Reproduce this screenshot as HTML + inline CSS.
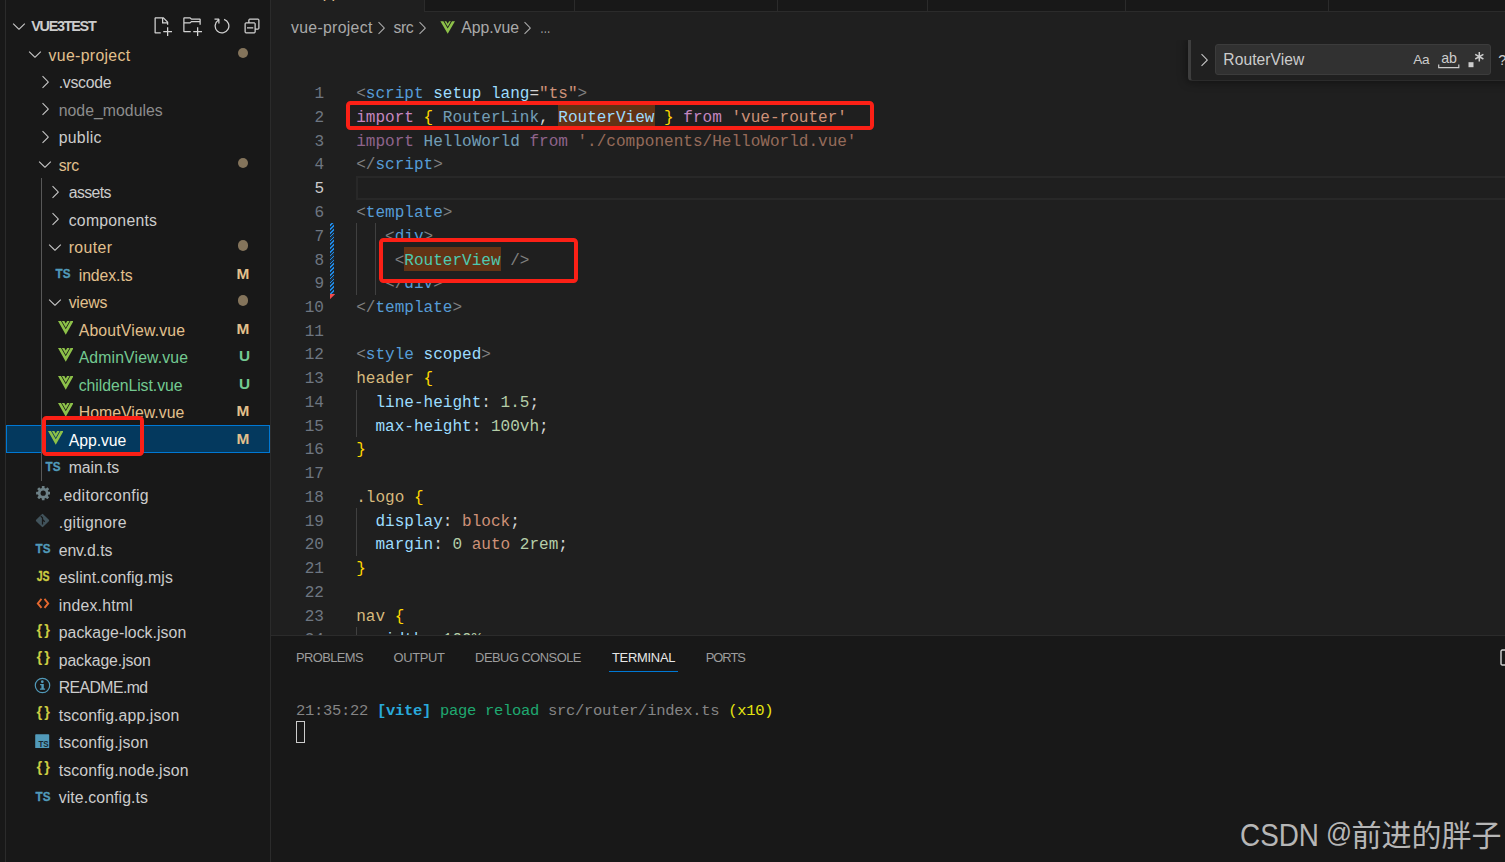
<!DOCTYPE html>
<html lang="en">
<head>
<meta charset="utf-8">
<title>App.vue - vue3test</title>
<style>
*{box-sizing:border-box;margin:0;padding:0}
html,body{width:1505px;height:862px;overflow:hidden;background:#181818}
body{position:relative;font-family:"Liberation Sans","Noto Sans CJK SC",sans-serif;color:#ccc;-webkit-font-smoothing:antialiased}
.abs{position:absolute}
/* ---------- sidebar ---------- */
#actbar{position:absolute;left:0;top:0;width:6px;height:862px;background:#181818;border-right:1px solid #2b2b2b}
#side{position:absolute;left:6px;top:0;width:265px;height:862px;background:#181818;border-right:1px solid #2b2b2b;overflow:hidden}
.row{position:absolute;left:0;width:264px;height:27.5px;line-height:27.5px;font-size:15.8px;white-space:nowrap;color:#ccc}
.row .lbl{position:absolute;top:1.3px}
.row .tw{position:absolute;top:3.75px;width:20px;height:20px;margin-left:-0.25px}
.row .ic{position:absolute;top:0;height:27.5px}
.row .sv{position:absolute}
.row .bdg{position:absolute;left:224px;width:26px;text-align:center;top:-0.5px;font-size:15.4px;font-weight:bold;letter-spacing:0}
.row .dot{position:absolute;left:232.1px;top:7.6px;width:10.2px;height:10.2px;border-radius:50%;background:#84745b}
.m{color:#e2c08d}.u{color:#73c991}.ign{color:#8c8c8c}
.row.sel{background:#04395e;box-shadow:inset 0 0 0 1px #0078d4}
.selm{color:#fff}
.tstxt{font-weight:bold;font-size:12.6px;letter-spacing:-0.3px;color:#519aba;font-family:"Liberation Sans",sans-serif}
/* ---------- editor ---------- */
#ed{position:absolute;left:271px;top:0;width:1234px;height:635px;background:#1f1f1f;overflow:hidden}
#tabs{position:absolute;left:0;top:0;width:1234px;height:12px;background:#181818;border-bottom:1px solid #2b2b2b;overflow:visible}
#tabs i{position:absolute;top:0;width:1px;height:12px;background:#2b2b2b}
#bc{position:absolute;left:0;top:13.5px;width:900px;height:28px;line-height:28px;font-size:15.8px;color:#a9a9a9;white-space:nowrap}
.ln,.cl{position:absolute;height:23.75px;line-height:23.75px;font-family:"Liberation Mono","DejaVu Sans Mono",monospace;font-size:16.04px;white-space:pre}
.ln{left:0;width:53px;text-align:right;color:#6e7681}
.cl{left:85.2px;color:#d4d4d4}
/* ---------- panel ---------- */
#panel{position:absolute;left:271px;top:635px;width:1234px;height:227px;background:#181818;border-top:1px solid #2b2b2b;overflow:hidden}
.pt{position:absolute;top:11.2px;height:22px;line-height:22px;font-size:12.9px;color:#9d9d9d;white-space:nowrap;letter-spacing:-0.1px}
.term{position:absolute;left:25px;font-family:"Liberation Mono","DejaVu Sans Mono",monospace;font-size:15.5px;letter-spacing:-0.3px;white-space:pre;height:21px;line-height:21px}
</style>
</head>
<body>
<div id="actbar"></div>
<div id="side">
<div class="row" style="top:12.25px"><svg class="tw" style="left:3px" width="20" height="20" viewBox="0 0 16 16"><path fill="#c5c5c5" d="M7.976 10.072l4.357-4.357.62.618L8.284 11h-.618L3 6.333l.619-.618 4.357 4.357z"/></svg><span class="lbl" style="left:25.2px;top:1.2px;font-weight:bold;font-size:14.4px;color:#ccc;letter-spacing:-1.259px;">VUE3TEST</span><svg class="sv" style="left:145.6px;top:3.75px" width="20" height="20" viewBox="0 0 16 16"><path fill="#d2d2d2" fill-rule="evenodd" clip-rule="evenodd" d="M9.5 1.1l3.4 3.5.1.4v2h-1V6H8V2H3v11h4v1H2.5l-.5-.5v-12l.5-.5h6.7l.3.1zM9 2v3h2.9L9 2zm4 14h-1v-3H9v-1h3V9h1v3h3v1h-3v3z"/></svg><svg class="sv" style="left:175.6px;top:3.75px" width="20" height="20" viewBox="0 0 16 16"><path fill="#d2d2d2" fill-rule="evenodd" clip-rule="evenodd" d="M14.5 2H7.71l-.85-.85L6.51 1h-5l-.5.5v11l.5.5H7v-1H1.99V6h4.49l.35-.15.86-.86H14v1.5l-.001.51h1.011V2.5L14.5 2zm-.51 2h-6.5l-.35.15-.86.86H2v-3h4.29l.85.85.36.15H14l-.01.99zM13 16h-1v-3H9v-1h3V9h1v3h3v1h-3v3z"/></svg><svg class="sv" style="left:205.8px;top:3.75px" width="20" height="20" viewBox="0 0 16 16"><path fill="#d2d2d2" fill-rule="evenodd" clip-rule="evenodd" d="M4.681 3H2V2h3.5l.5.5V6H5V4a5 5 0 1 0 4.53-.761l.302-.954A6 6 0 1 1 4.681 3z"/></svg><svg class="sv" style="left:235.8px;top:3.75px" width="20" height="20" viewBox="0 0 16 16"><path fill="#d2d2d2" fill-rule="evenodd" clip-rule="evenodd" d="M9 9H4v1h5V9zM5 3l1-1h7l1 1v7l-1 1h-2v2l-1 1H3l-1-1V6l1-1h2V3zm1 2h4l1 1v4h2V3H6v2zm4 1H3v7h7V6z"/></svg></div>
<div class="row" style="top:40.25px"><svg class="tw" style="left:19.0px" width="20" height="20" viewBox="0 0 16 16"><path fill="#c5c5c5" d="M7.976 10.072l4.357-4.357.62.618L8.284 11h-.618L3 6.333l.619-.618 4.357 4.357z"/></svg><span class="lbl m" style="left:42.5px;letter-spacing:0.35px;">vue-project</span><span class="dot"></span></div>
<div class="row" style="top:67.75px"><svg class="tw" style="left:29.200000000000003px" width="20" height="20" viewBox="0 0 16 16"><path fill="#c5c5c5" d="M10.072 8.024L5.715 3.667l.618-.62L11 7.716v.618L6.333 13l-.618-.619 4.357-4.357z"/></svg><span class="lbl " style="left:52.7px;letter-spacing:-0.264px;">.vscode</span></div>
<div class="row" style="top:95.25px"><svg class="tw" style="left:29.200000000000003px" width="20" height="20" viewBox="0 0 16 16"><path fill="#c5c5c5" d="M10.072 8.024L5.715 3.667l.618-.62L11 7.716v.618L6.333 13l-.618-.619 4.357-4.357z"/></svg><span class="lbl ign" style="left:52.7px;letter-spacing:0.039px;">node_modules</span></div>
<div class="row" style="top:122.75px"><svg class="tw" style="left:29.200000000000003px" width="20" height="20" viewBox="0 0 16 16"><path fill="#c5c5c5" d="M10.072 8.024L5.715 3.667l.618-.62L11 7.716v.618L6.333 13l-.618-.619 4.357-4.357z"/></svg><span class="lbl " style="left:52.7px;letter-spacing:0.286px;">public</span></div>
<div class="row" style="top:150.25px"><svg class="tw" style="left:29.200000000000003px" width="20" height="20" viewBox="0 0 16 16"><path fill="#c5c5c5" d="M7.976 10.072l4.357-4.357.62.618L8.284 11h-.618L3 6.333l.619-.618 4.357 4.357z"/></svg><span class="lbl m" style="left:52.7px;letter-spacing:-0.354px;">src</span><span class="dot"></span></div>
<div class="row" style="top:177.75px"><svg class="tw" style="left:39.2px" width="20" height="20" viewBox="0 0 16 16"><path fill="#c5c5c5" d="M10.072 8.024L5.715 3.667l.618-.62L11 7.716v.618L6.333 13l-.618-.619 4.357-4.357z"/></svg><span class="lbl " style="left:62.7px;letter-spacing:-0.577px;">assets</span></div>
<div class="row" style="top:205.25px"><svg class="tw" style="left:39.2px" width="20" height="20" viewBox="0 0 16 16"><path fill="#c5c5c5" d="M10.072 8.024L5.715 3.667l.618-.62L11 7.716v.618L6.333 13l-.618-.619 4.357-4.357z"/></svg><span class="lbl " style="left:62.7px;letter-spacing:0.253px;">components</span></div>
<div class="row" style="top:232.75px"><svg class="tw" style="left:39.2px" width="20" height="20" viewBox="0 0 16 16"><path fill="#c5c5c5" d="M7.976 10.072l4.357-4.357.62.618L8.284 11h-.618L3 6.333l.619-.618 4.357 4.357z"/></svg><span class="lbl m" style="left:62.7px;letter-spacing:0.421px;">router</span><span class="dot"></span></div>
<div class="row" style="top:260.25px"><svg class="sv" style="left:46.0px;top:0" width="22" height="27.5"><text x="11" y="17.9" text-anchor="middle" textLength="14.9" lengthAdjust="spacingAndGlyphs" font-family="Liberation Sans,sans-serif" font-weight="bold" font-size="13.5" fill="#519aba" stroke="#519aba" stroke-width="0.35">TS</text></svg><span class="lbl m" style="left:72.7px;letter-spacing:-0.068px;">index.ts</span><span class="bdg m">M</span></div>
<div class="row" style="top:287.75px"><svg class="tw" style="left:39.2px" width="20" height="20" viewBox="0 0 16 16"><path fill="#c5c5c5" d="M7.976 10.072l4.357-4.357.62.618L8.284 11h-.618L3 6.333l.619-.618 4.357 4.357z"/></svg><span class="lbl m" style="left:62.7px;letter-spacing:-0.221px;">views</span><span class="dot"></span></div>
<div class="row" style="top:315.25px"><svg class="sv" style="left:51.7px;top:5.7px" width="15.5" height="13.8" viewBox="0 0 15.5 13.8"><path fill="#8dc149" d="M0 0H3L7.75 8.2L12.5 0H15.5L7.75 13.8Z"/><path fill="#8dc149" d="M3.9 0H6.4L7.75 2.4L9.1 0H11.6L7.75 6.7Z"/></svg><span class="lbl m" style="left:72.7px;letter-spacing:0.175px;">AboutView.vue</span><span class="bdg m">M</span></div>
<div class="row" style="top:342.75px"><svg class="sv" style="left:51.7px;top:5.7px" width="15.5" height="13.8" viewBox="0 0 15.5 13.8"><path fill="#8dc149" d="M0 0H3L7.75 8.2L12.5 0H15.5L7.75 13.8Z"/><path fill="#8dc149" d="M3.9 0H6.4L7.75 2.4L9.1 0H11.6L7.75 6.7Z"/></svg><span class="lbl u" style="left:72.7px;letter-spacing:0.129px;">AdminView.vue</span><span class="bdg u" style="left:225.5px">U</span></div>
<div class="row" style="top:370.25px"><svg class="sv" style="left:51.7px;top:5.7px" width="15.5" height="13.8" viewBox="0 0 15.5 13.8"><path fill="#8dc149" d="M0 0H3L7.75 8.2L12.5 0H15.5L7.75 13.8Z"/><path fill="#8dc149" d="M3.9 0H6.4L7.75 2.4L9.1 0H11.6L7.75 6.7Z"/></svg><span class="lbl u" style="left:72.7px;letter-spacing:-0.047px;">childenList.vue</span><span class="bdg u" style="left:225.5px">U</span></div>
<div class="row" style="top:397.75px"><svg class="sv" style="left:51.7px;top:5.7px" width="15.5" height="13.8" viewBox="0 0 15.5 13.8"><path fill="#8dc149" d="M0 0H3L7.75 8.2L12.5 0H15.5L7.75 13.8Z"/><path fill="#8dc149" d="M3.9 0H6.4L7.75 2.4L9.1 0H11.6L7.75 6.7Z"/></svg><span class="lbl m" style="left:72.7px;letter-spacing:0.051px;">HomeView.vue</span><span class="bdg m">M</span></div>
<div class="row sel" style="top:425.25px"><svg class="sv" style="left:41.7px;top:5.7px" width="15.5" height="13.8" viewBox="0 0 15.5 13.8"><path fill="#8dc149" d="M0 0H3L7.75 8.2L12.5 0H15.5L7.75 13.8Z"/><path fill="#8dc149" d="M3.9 0H6.4L7.75 2.4L9.1 0H11.6L7.75 6.7Z"/></svg><span class="lbl selm" style="left:62.7px;letter-spacing:-0.054px;">App.vue</span><span class="bdg m">M</span></div>
<div class="row" style="top:452.75px"><svg class="sv" style="left:36.0px;top:0" width="22" height="27.5"><text x="11" y="17.9" text-anchor="middle" textLength="14.9" lengthAdjust="spacingAndGlyphs" font-family="Liberation Sans,sans-serif" font-weight="bold" font-size="13.5" fill="#519aba" stroke="#519aba" stroke-width="0.35">TS</text></svg><span class="lbl " style="left:62.7px;letter-spacing:-0.076px;">main.ts</span></div>
<div class="row" style="top:480.25px"><svg class="sv" style="left:29.8px;top:5.9px" width="14.4" height="14.4" viewBox="0 0 16 16"><g fill="#6d8086"><rect x="6.5" y="0.1" width="3" height="15.8" rx="0.4" transform="rotate(0 8 8)"/><rect x="6.5" y="0.1" width="3" height="15.8" rx="0.4" transform="rotate(45 8 8)"/><rect x="6.5" y="0.1" width="3" height="15.8" rx="0.4" transform="rotate(90 8 8)"/><rect x="6.5" y="0.1" width="3" height="15.8" rx="0.4" transform="rotate(135 8 8)"/><circle cx="8" cy="8" r="6"/></g><circle cx="8" cy="8" r="2.9" fill="#181818"/></svg><span class="lbl " style="left:52.7px;letter-spacing:0.318px;">.editorconfig</span></div>
<div class="row" style="top:507.75px"><svg class="sv" style="left:28.9px;top:5.3px" width="15" height="15" viewBox="0 0 16 16"><rect x="2.7" y="2.7" width="10.6" height="10.6" rx="1" fill="#41535b" transform="rotate(45 8 8)"/><path d="M6.2 3.4L8 5.2V12.2M8 7l2.4 2.3" stroke="#181818" stroke-width="1.3" fill="none"/></svg><span class="lbl " style="left:52.7px;letter-spacing:0.33px;">.gitignore</span></div>
<div class="row" style="top:535.25px"><svg class="sv" style="left:26.0px;top:0" width="22" height="27.5"><text x="11" y="17.9" text-anchor="middle" textLength="14.9" lengthAdjust="spacingAndGlyphs" font-family="Liberation Sans,sans-serif" font-weight="bold" font-size="13.5" fill="#519aba" stroke="#519aba" stroke-width="0.35">TS</text></svg><span class="lbl " style="left:52.7px;letter-spacing:-0.069px;">env.d.ts</span></div>
<div class="row" style="top:562.75px"><svg class="sv" style="left:26.0px;top:0" width="22" height="27.5"><text x="11.2" y="18.2" text-anchor="middle" textLength="12.9" lengthAdjust="spacingAndGlyphs" font-family="Liberation Sans,sans-serif" font-weight="bold" font-size="13.8" fill="#cbcb41" stroke="#cbcb41" stroke-width="0.35">JS</text></svg><span class="lbl " style="left:52.7px;letter-spacing:0.107px;">eslint.config.mjs</span></div>
<div class="row" style="top:590.25px"><svg class="sv" style="left:30.2px;top:7.8px" width="14" height="11" viewBox="0 0 14 11"><path d="M5.5 0.9L1.8 5.4L5.5 9.9M8.5 0.9L12.2 5.4L8.5 9.9" stroke="#e4682f" stroke-width="1.9" fill="none"/></svg><span class="lbl " style="left:52.7px;letter-spacing:0.22px;">index.html</span></div>
<div class="row" style="top:617.75px"><svg class="sv" style="left:26.0px;top:0" width="22" height="27.5"><text x="11.2" y="17.2" text-anchor="middle" textLength="13.6" lengthAdjust="spacing" font-family="Liberation Sans,sans-serif" font-weight="bold" font-size="14.8" fill="#cbcb41">{}</text></svg><span class="lbl " style="left:52.7px;letter-spacing:0.067px;">package-lock.json</span></div>
<div class="row" style="top:645.25px"><svg class="sv" style="left:26.0px;top:0" width="22" height="27.5"><text x="11.2" y="17.2" text-anchor="middle" textLength="13.6" lengthAdjust="spacing" font-family="Liberation Sans,sans-serif" font-weight="bold" font-size="14.8" fill="#cbcb41">{}</text></svg><span class="lbl " style="left:52.7px;letter-spacing:-0.084px;">package.json</span></div>
<div class="row" style="top:672.75px"><svg class="sv" style="left:28.0px;top:4.6px" width="17" height="17" viewBox="0 0 17 17"><circle cx="8.5" cy="8.5" r="7.2" fill="none" stroke="#519aba" stroke-width="1.2"/><circle cx="8.3" cy="4.7" r="1.35" fill="#519aba"/><path fill="#519aba" d="M6.1 7H9.8V11.5H11.1V12.8H5.9V11.5H7.4V8.3H6.1Z"/></svg><span class="lbl " style="left:52.7px;letter-spacing:-0.559px;">README.md</span></div>
<div class="row" style="top:700.25px"><svg class="sv" style="left:26.0px;top:0" width="22" height="27.5"><text x="11.2" y="17.2" text-anchor="middle" textLength="13.6" lengthAdjust="spacing" font-family="Liberation Sans,sans-serif" font-weight="bold" font-size="14.8" fill="#cbcb41">{}</text></svg><span class="lbl " style="left:52.7px;letter-spacing:0.12px;">tsconfig.app.json</span></div>
<div class="row" style="top:727.75px"><svg class="sv" style="left:29.3px;top:6.3px" width="14.4" height="14.4" viewBox="0 0 14.4 14.4"><rect x="0.2" y="0.2" width="14" height="14" rx="0.8" fill="#519aba"/><text x="3.5" y="12.9" font-family="Liberation Sans,sans-serif" font-weight="bold" font-size="9.6" fill="#1b2830" textLength="10.2" lengthAdjust="spacingAndGlyphs">TS</text></svg><span class="lbl " style="left:52.7px;letter-spacing:0.145px;">tsconfig.json</span></div>
<div class="row" style="top:755.25px"><svg class="sv" style="left:26.0px;top:0" width="22" height="27.5"><text x="11.2" y="17.2" text-anchor="middle" textLength="13.6" lengthAdjust="spacing" font-family="Liberation Sans,sans-serif" font-weight="bold" font-size="14.8" fill="#cbcb41">{}</text></svg><span class="lbl " style="left:52.7px;letter-spacing:0.147px;">tsconfig.node.json</span></div>
<div class="row" style="top:782.75px"><svg class="sv" style="left:26.0px;top:0" width="22" height="27.5"><text x="11" y="17.9" text-anchor="middle" textLength="14.9" lengthAdjust="spacingAndGlyphs" font-family="Liberation Sans,sans-serif" font-weight="bold" font-size="13.5" fill="#519aba" stroke="#519aba" stroke-width="0.35">TS</text></svg><span class="lbl " style="left:52.7px;letter-spacing:0.114px;">vite.config.ts</span></div>
<div class="abs" style="left:35px;top:178px;width:1px;height:302.5px;background:#585858"></div>
<div class="abs" style="left:36px;top:416px;width:102px;height:40px;border:4px solid #fb2016;border-radius:4.5px"></div>
</div>
<div id="ed">
<div id="tabs"><b style="position:absolute;left:0;top:0;width:153px;height:13px;background:#1f1f1f;overflow:hidden"><span style="position:absolute;left:41.3px;top:-16.7px;line-height:20px;font-size:15.8px;font-weight:normal;color:#e2c08d;white-space:nowrap">App.vue</span></b><i style="left:153px"></i><i style="left:303px"></i><i style="left:506px"></i><i style="left:656px"></i><i style="left:854px"></i><i style="left:1057px"></i></div>
<div id="bc"><span class="abs bct" style="left:20px;top:0;letter-spacing:0.318px">vue-project</span><svg class="abs" style="left:100px;top:4.2px" width="20" height="20" viewBox="0 0 16 16"><path fill="#a9a9a9" d="M10.072 8.024L5.715 3.667l.618-.62L11 7.716v.618L6.333 13l-.618-.619 4.357-4.357z"/></svg><span class="abs bct" style="left:122.5px;top:0;letter-spacing:-0.467px">src</span><svg class="abs" style="left:140.5px;top:4.2px" width="20" height="20" viewBox="0 0 16 16"><path fill="#a9a9a9" d="M10.072 8.024L5.715 3.667l.618-.62L11 7.716v.618L6.333 13l-.618-.619 4.357-4.357z"/></svg><svg class="abs" style="left:169.3px;top:7.5px" width="15.4" height="13.2" viewBox="0 0 17 15"><path fill="#8dc149" d="M0.2 0.3H3.6L8.5 8.6L13.4 0.3H16.8L8.5 14.6Z"/><path fill="#8dc149" d="M4.9 0.3H6.9L8.5 3.1L10.1 0.3H12.1L8.5 6.6Z"/></svg><span class="abs bct" style="left:190.3px;top:0;letter-spacing:-0.043px">App.vue</span><svg class="abs" style="left:246.39999999999998px;top:4.2px" width="20" height="20" viewBox="0 0 16 16"><path fill="#a9a9a9" d="M10.072 8.024L5.715 3.667l.618-.62L11 7.716v.618L6.333 13l-.618-.619 4.357-4.357z"/></svg><span class="abs bct" style="left:269px;top:0;transform:scaleX(.67);transform-origin:0 0">…</span></div>
<div class="abs" style="left:85.2px;top:175.75px;width:1160px;height:23.75px;border:2px solid #282828"></div>
<div class="abs" style="left:287.32px;top:104.5px;width:96.25px;height:23.75px;background:#633315"></div>
<div class="abs" style="left:85.4px;top:223.25px;width:1px;height:71.25px;background:#404040"></div>
<div class="abs" style="left:103.8px;top:223.25px;width:1px;height:71.25px;background:#404040"></div>
<div class="abs" style="left:85.4px;top:389.5px;width:1px;height:47.5px;background:#404040"></div>
<div class="abs" style="left:85.4px;top:508.25px;width:1px;height:47.5px;background:#404040"></div>
<div class="abs" style="left:85.4px;top:627.0px;width:1px;height:23.75px;background:#404040"></div>
<div class="abs" style="left:59.2px;top:223.25px;width:3.6px;height:71.25px;background:repeating-linear-gradient(-45deg,#1f8ae6 0 1.1px,#1b2f42 1.1px 2.7px)"></div>
<svg class="abs" style="left:59.2px;top:294.0px" width="5.2" height="5.2" viewBox="0 0 6 6"><path d="M0 0H6L0 6Z" fill="#f14c4c"/></svg>
<div class="ln" style="top:83.05px">1</div>
<div class="cl" style="top:83.05px"><span style="color:#808080">&lt;</span><span style="color:#569cd6">script</span> <span style="color:#9cdcfe">setup</span> <span style="color:#9cdcfe">lang</span><span style="color:#d4d4d4">=</span><span style="color:#ce9178">"ts"</span><span style="color:#808080">&gt;</span></div>
<div class="ln" style="top:106.8px">2</div>
<div class="cl" style="top:106.8px"><span style="color:#c586c0">import</span> <span style="color:#ffd700">{</span> <span style="opacity:.67"><span style="color:#9cdcfe">RouterLink</span></span><span style="color:#d4d4d4">,</span> <span style="color:#9cdcfe">RouterView</span> <span style="color:#ffd700">}</span> <span style="color:#c586c0">from</span> <span style="color:#ce9178">'vue-router'</span></div>
<div class="ln" style="top:130.55px">3</div>
<div class="cl" style="top:130.55px"><span style="opacity:.67"><span style="color:#c586c0">import</span> <span style="color:#9cdcfe">HelloWorld</span> <span style="color:#c586c0">from</span> <span style="color:#ce9178">'./components/HelloWorld.vue'</span></span></div>
<div class="ln" style="top:154.3px">4</div>
<div class="cl" style="top:154.3px"><span style="color:#808080">&lt;/</span><span style="color:#569cd6">script</span><span style="color:#808080">&gt;</span></div>
<div class="ln" style="top:178.05px;color:#ccc">5</div>
<div class="ln" style="top:201.8px">6</div>
<div class="cl" style="top:201.8px"><span style="color:#808080">&lt;</span><span style="color:#569cd6">template</span><span style="color:#808080">&gt;</span></div>
<div class="ln" style="top:225.55px">7</div>
<div class="cl" style="top:225.55px">   <span style="color:#808080">&lt;</span><span style="color:#569cd6">div</span><span style="color:#808080">&gt;</span></div>
<div class="ln" style="top:250.1px">8</div>
<div class="ln" style="top:273.05px">9</div>
<div class="cl" style="top:273.05px">   <span style="color:#808080">&lt;/</span><span style="color:#569cd6">div</span><span style="color:#808080">&gt;</span></div>
<div class="ln" style="top:296.8px">10</div>
<div class="cl" style="top:296.8px"><span style="color:#808080">&lt;/</span><span style="color:#569cd6">template</span><span style="color:#808080">&gt;</span></div>
<div class="ln" style="top:320.55px">11</div>
<div class="ln" style="top:344.3px">12</div>
<div class="cl" style="top:344.3px"><span style="color:#808080">&lt;</span><span style="color:#569cd6">style</span> <span style="color:#9cdcfe">scoped</span><span style="color:#808080">&gt;</span></div>
<div class="ln" style="top:368.05px">13</div>
<div class="cl" style="top:368.05px"><span style="color:#d7ba7d">header</span> <span style="color:#ffd700">{</span></div>
<div class="ln" style="top:391.8px">14</div>
<div class="cl" style="top:391.8px">  <span style="color:#9cdcfe">line-height</span><span style="color:#d4d4d4">:</span> <span style="color:#b5cea8">1.5</span><span style="color:#d4d4d4">;</span></div>
<div class="ln" style="top:415.55px">15</div>
<div class="cl" style="top:415.55px">  <span style="color:#9cdcfe">max-height</span><span style="color:#d4d4d4">:</span> <span style="color:#b5cea8">100vh</span><span style="color:#d4d4d4">;</span></div>
<div class="ln" style="top:439.3px">16</div>
<div class="cl" style="top:439.3px"><span style="color:#ffd700">}</span></div>
<div class="ln" style="top:463.05px">17</div>
<div class="ln" style="top:486.8px">18</div>
<div class="cl" style="top:486.8px"><span style="color:#d7ba7d">.logo</span> <span style="color:#ffd700">{</span></div>
<div class="ln" style="top:510.55px">19</div>
<div class="cl" style="top:510.55px">  <span style="color:#9cdcfe">display</span><span style="color:#d4d4d4">:</span> <span style="color:#ce9178">block</span><span style="color:#d4d4d4">;</span></div>
<div class="ln" style="top:534.3px">20</div>
<div class="cl" style="top:534.3px">  <span style="color:#9cdcfe">margin</span><span style="color:#d4d4d4">:</span> <span style="color:#b5cea8">0</span> <span style="color:#ce9178">auto</span> <span style="color:#b5cea8">2rem</span><span style="color:#d4d4d4">;</span></div>
<div class="ln" style="top:558.05px">21</div>
<div class="cl" style="top:558.05px"><span style="color:#ffd700">}</span></div>
<div class="ln" style="top:581.8px">22</div>
<div class="ln" style="top:605.55px">23</div>
<div class="cl" style="top:605.55px"><span style="color:#d7ba7d">nav</span> <span style="color:#ffd700">{</span></div>
<div class="ln" style="top:629.3px">24</div>
<div class="cl" style="top:629.3px">  <span style="color:#9cdcfe">width</span><span style="color:#d4d4d4">:</span> <span style="color:#b5cea8">100%</span><span style="color:#d4d4d4">;</span></div>
<div class="abs" style="left:75px;top:101px;width:528px;height:29px;border:4px solid #fb2016;border-radius:4.5px"></div>
<div class="abs" style="left:108px;top:238px;width:199px;height:45px;border:4px solid #fb2016;border-radius:4.5px;background:#1f1f1f"></div>
<div class="abs" style="left:133.32px;top:247.0px;width:96.25px;height:23.75px;background:#633315"></div>
<div class="cl" style="top:250.1px">    <span style="color:#808080">&lt;</span><span style="color:#4ec9b0">RouterView</span> <span style="color:#808080">/&gt;</span></div>
<div class="abs" style="left:890px;top:40px;width:344px;height:70px;overflow:hidden"><div id="find" class="abs" style="left:27px;top:0;width:330px;height:41px;background:#202020;border-left:3.5px solid #3e3e3e;border-bottom:1px solid #2b2b2b;border-bottom-left-radius:4px;box-shadow:0 0 8px 2px rgba(0,0,0,.36)"><div class="abs" style="left:1.3px;top:0;width:326px;height:40px">
<svg class="abs" style="left:1.5px;top:10px" width="20" height="20" viewBox="0 0 16 16"><path fill="#c5c5c5" d="M10.072 8.024L5.715 3.667l.618-.62L11 7.716v.618L6.333 13l-.618-.619 4.357-4.357z"/></svg>
<div class="abs" style="left:23px;top:4px;width:276px;height:31px;background:#313131;border:1px solid #3c3c3c;border-radius:3px"></div>
<span class="abs" style="left:31px;top:5px;height:29px;line-height:29px;font-size:15.6px;color:#ccc;letter-spacing:0.08px">RouterView</span>
<span class="abs" style="left:221px;top:5px;height:29px;line-height:30px;font-size:13.6px;color:#ccc;letter-spacing:-0.3px">Aa</span>
<span class="abs" style="left:249px;top:4px;height:29px;line-height:29px;font-size:14.2px;color:#ccc;letter-spacing:-0.2px">ab</span>
<svg class="abs" style="left:246px;top:24px" width="22" height="5" viewBox="0 0 22 5"><path d="M0.7 0.5V3.6H20.8V0.5" stroke="#ccc" stroke-width="1.2" fill="none"/></svg>
<svg class="abs" style="left:276px;top:11px" width="17" height="17" viewBox="0 0 17 17"><rect x="0.5" y="11.2" width="5" height="5" fill="#ccc"/><path d="M11.3 1V10.4M7.2 3.4L15.4 8M15.4 3.4L7.2 8" stroke="#ccc" stroke-width="1.5" fill="none"/></svg>
<span class="abs" style="left:306px;top:5.5px;height:29px;line-height:29px;font-size:14.6px;color:#ccc;white-space:nowrap">? of 2</span>
</div></div></div>
</div>
<div id="panel">
<span class="pt" style="left:25px;letter-spacing:-0.575px">PROBLEMS</span>
<span class="pt" style="left:122.5px;letter-spacing:-0.317px">OUTPUT</span>
<span class="pt" style="left:204.1px;letter-spacing:-0.508px">DEBUG CONSOLE</span>
<span class="pt" style="left:341px;letter-spacing:-0.25px;color:#e7e7e7">TERMINAL</span>
<span class="pt" style="left:434.7px;letter-spacing:-0.98px">PORTS</span>
<div class="abs" style="left:338px;top:34.5px;width:69px;height:1.3px;background:#0078d4"></div>
<svg class="abs" style="left:1228.6px;top:12.8px" width="10" height="18" viewBox="0 0 10 18"><rect x="1" y="1" width="14" height="15" rx="1.3" fill="none" stroke="#d0d0d0" stroke-width="1.4"/></svg>
<div class="term" style="top:64.8px"><span style="color:#858585">21:35:22</span> <b style="color:#29a9db">[vite]</b> <span style="color:#1fa870">page reload</span> <span style="color:#858585">src/router/index.ts</span> <span style="color:#e5e510">(x10)</span></div>
<div class="abs" style="left:25px;top:84.6px;width:8.6px;height:22px;border:1px solid #ccc"></div>
</div>
<div id="wm" class="abs" style="left:1200px;top:810px;width:305px;height:48px;color:#b6b6b6;white-space:nowrap">
<span class="abs" id="wm1" style="left:40px;top:5.5px;height:40px;line-height:40px;font-size:30.8px;transform:scaleX(.905);transform-origin:0 0">CSDN</span>
<span class="abs" id="wm2" style="left:126.2px;top:3px;height:40px;line-height:40px;font-size:27px;transform:scaleX(.95);transform-origin:0 0">@</span>
<span class="abs" id="wm3" style="left:151.6px;top:6.4px;height:40px;line-height:40px;font-size:30px;font-family:'Liberation Sans','Noto Sans CJK SC',sans-serif">前进的胖子</span>
</div>
</body>
</html>
